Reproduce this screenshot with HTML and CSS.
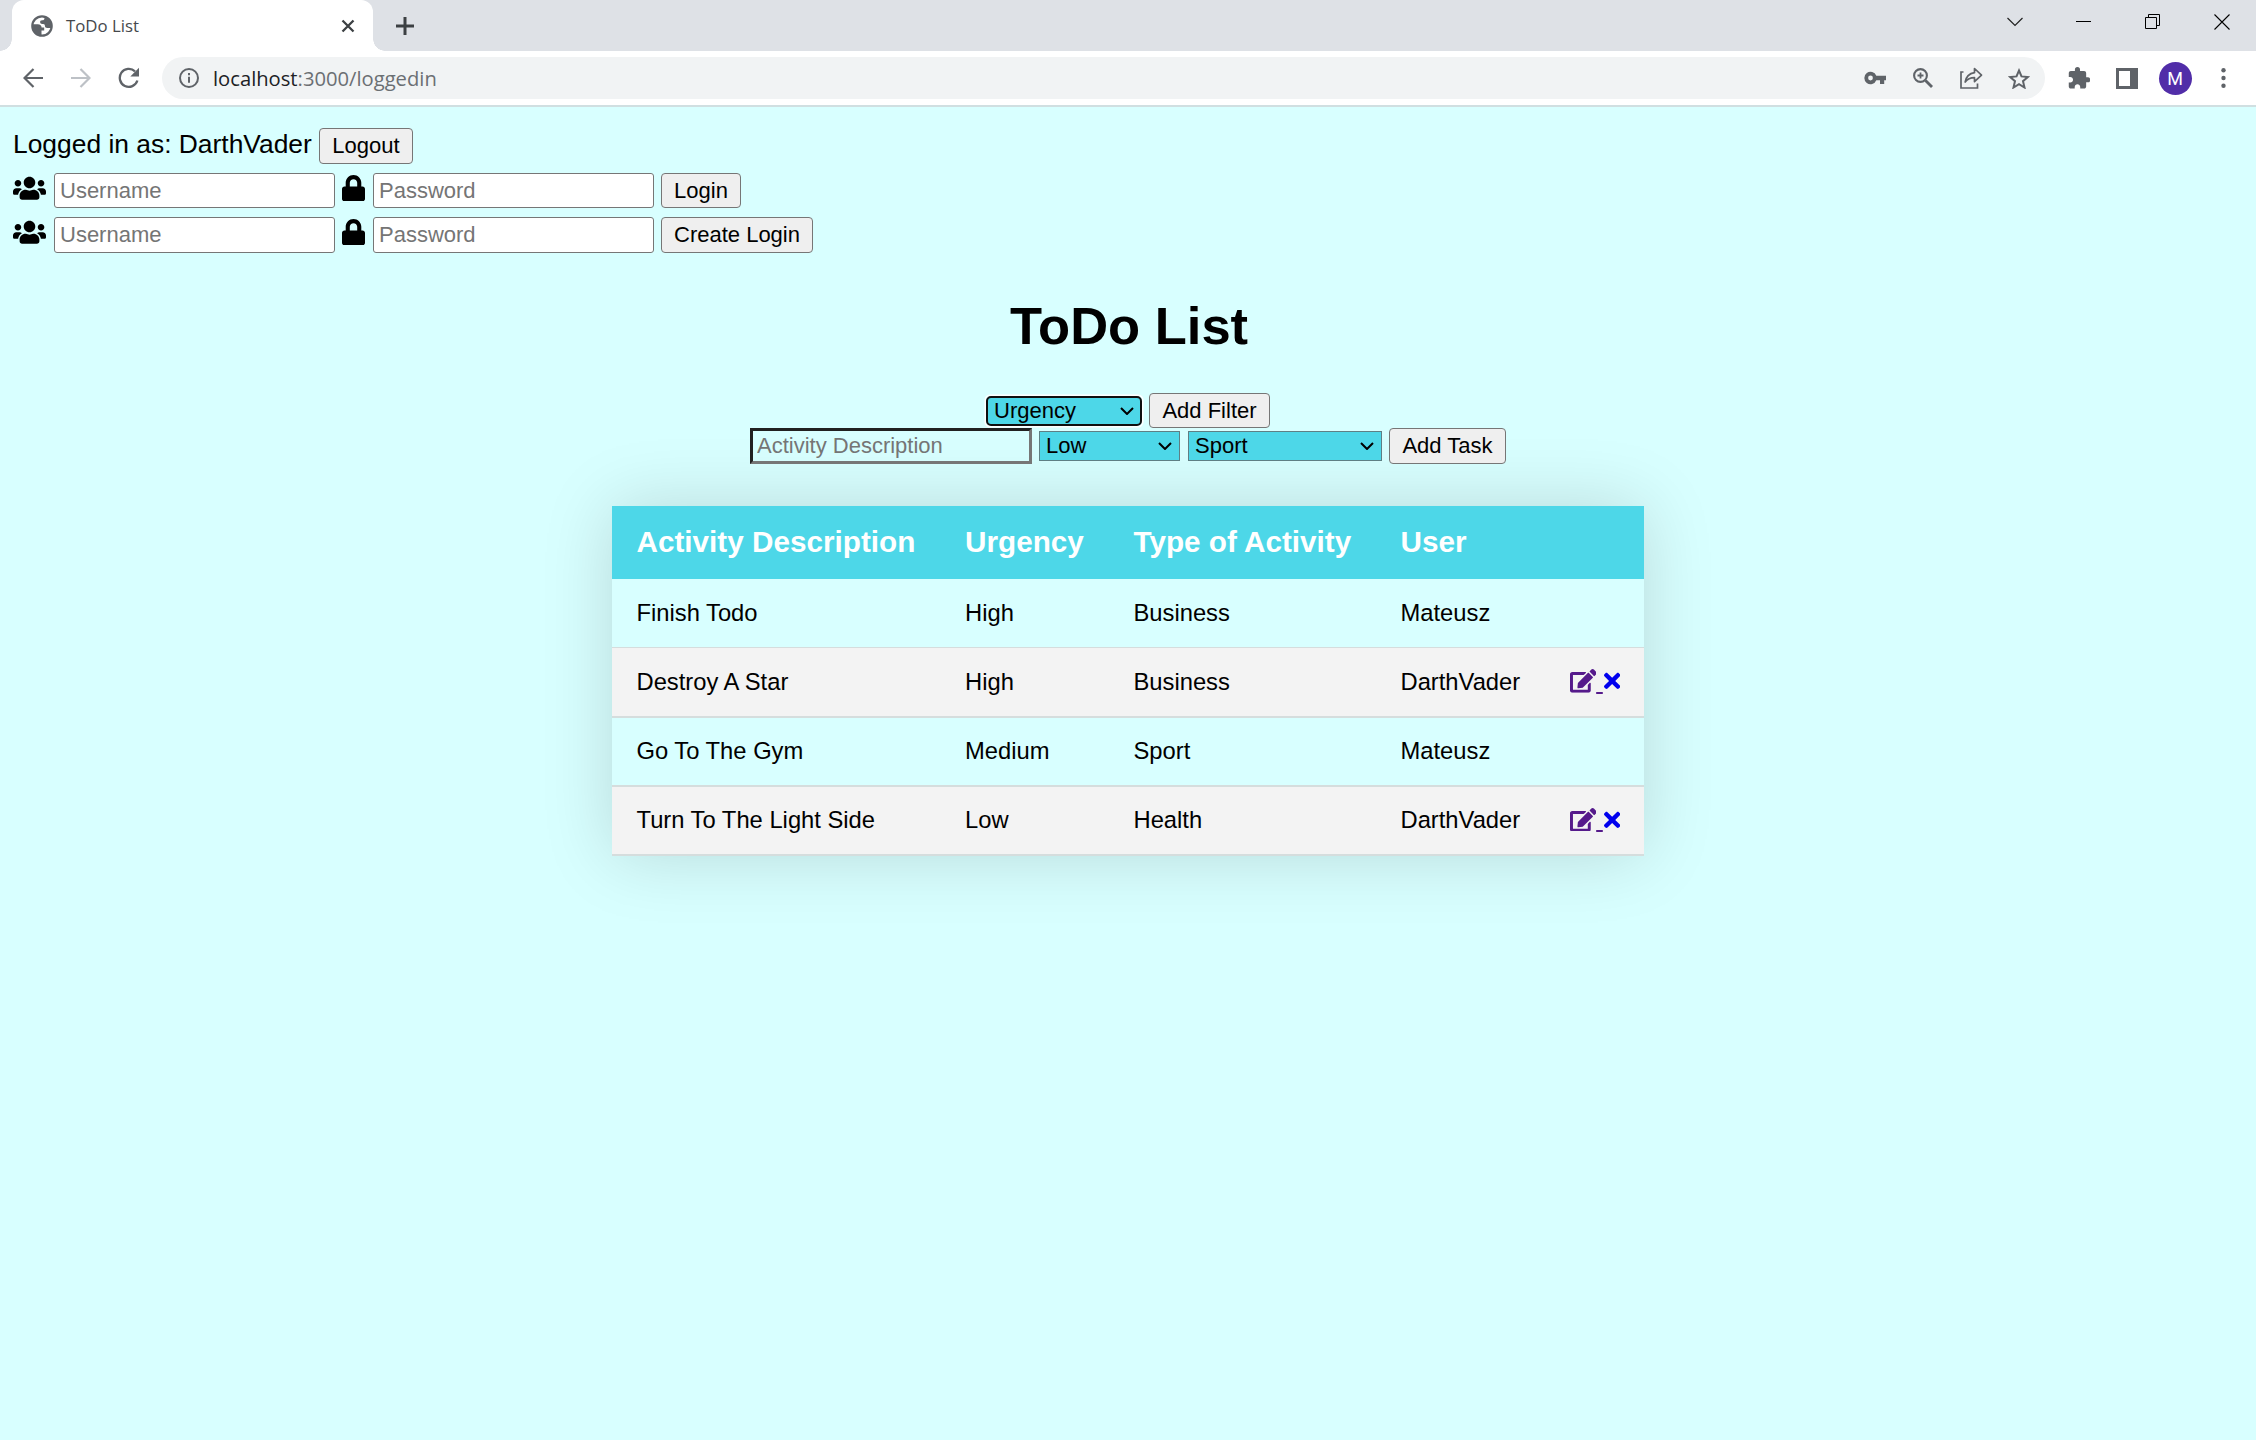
FILE: index.html
```html
<!DOCTYPE html>
<html lang="en">
<head>
<meta charset="utf-8">
<title>ToDo List</title>
<link rel="stylesheet" href="styles.css">
</head>
<body>
<svg class="defs" aria-hidden="true">
  <symbol id="users" viewBox="0 0 640 512"><path d="M96 224c35.3 0 64-28.7 64-64s-28.7-64-64-64-64 28.7-64 64 28.7 64 64 64zm448 0c35.3 0 64-28.7 64-64s-28.7-64-64-64-64 28.7-64 64 28.7 64 64 64zm32 32h-64c-17.6 0-33.5 7.1-45.1 18.6 40.3 22.1 68.9 62 75.1 109.4h66c17.7 0 32-14.3 32-32v-32c0-35.3-28.7-64-64-64zm-256 0c61.9 0 112-50.1 112-112S381.9 32 320 32 208 82.1 208 144s50.1 112 112 112zm76.8 32h-8.3c-20.8 10-43.9 16-68.5 16s-47.6-6-68.5-16h-8.3C179.6 288 128 339.6 128 403.2V432c0 26.5 21.5 48 48 48h288c26.5 0 48-21.5 48-48v-28.8c0-63.6-51.6-115.2-115.2-115.2zm-223.7-13.4C161.5 263.1 145.6 256 128 256H64c-35.3 0-64 28.7-64 64v32c0 17.7 14.3 32 32 32h65.9c6.3-47.4 34.9-87.3 75.2-109.4z"/></symbol>
  <symbol id="lock" viewBox="0 0 448 512"><path d="M400 224h-24v-72C376 68.2 307.8 0 224 0S72 68.2 72 152v72H48c-26.5 0-48 21.5-48 48v192c0 26.5 21.5 48 48 48h352c26.5 0 48-21.5 48-48V272c0-26.5-21.5-48-48-48zm-104 0H152v-72c0-39.7 32.3-72 72-72s72 32.3 72 72v72z"/></symbol>
  <symbol id="edit" viewBox="0 0 576 512"><path d="M402.6 83.2l90.2 90.2c3.8 3.8 3.8 10 0 13.8L274.4 405.6l-92.8 10.3c-12.4 1.4-22.9-9.1-21.5-21.5l10.3-92.8L388.8 83.2c3.8-3.8 10-3.8 13.8 0zm162-22.9l-48.8-48.8c-15.2-15.2-39.9-15.2-55.2 0l-35.4 35.4c-3.8 3.8-3.8 10 0 13.8l90.2 90.2c3.8 3.8 10 3.8 13.8 0l35.4-35.4c15.2-15.3 15.2-40 0-55.2zM384 346.2V448H64V128h229.8c3.2 0 6.2-1.3 8.5-3.5l40-40c7.6-7.6 2.2-20.5-8.5-20.5H48C21.5 64 0 85.5 0 112v352c0 26.5 21.5 48 48 48h352c26.5 0 48-21.5 48-48V306.2c0-10.7-12.9-16-20.5-8.5l-40 40c-2.2 2.3-3.5 5.3-3.5 8.5z"/></symbol>
  <symbol id="times" viewBox="0 0 352 512"><path d="M242.72 256l100.07-100.07c12.28-12.28 12.28-32.19 0-44.48l-22.24-22.24c-12.28-12.28-32.19-12.28-44.48 0L176 189.28 75.93 89.21c-12.28-12.28-32.19-12.28-44.48 0L9.21 111.45c-12.28 12.28-12.28 32.19 0 44.48L109.28 256 9.21 356.07c-12.28 12.28-12.28 32.19 0 44.48l22.24 22.24c12.28 12.28 32.2 12.28 44.48 0L176 322.72l100.07 100.07c12.28 12.28 32.2 12.28 44.48 0l22.24-22.24c12.28-12.28 12.28-32.19 0-44.48L242.72 256z"/></symbol>
  <symbol id="chevron" viewBox="0 0 14 8"><path d="M1 1l6 6 6-6" fill="none" stroke="#000" stroke-width="2"/></symbol>
</svg>

<header class="browser">
  <div class="tabstrip">
    <div class="tab">
      <svg class="globe" viewBox="0 0 22 22"><circle cx="11" cy="11" r="9.700" fill="#fff" stroke="#5f6368" stroke-width="2.200"/><path d="M1 9.200h5.800c2.400 0 3.800 1.300 3.800 3.400h2.600v2.800H10.500v5.400C5 20.600 1 16.500 1 11zM13.500 1.600v1.300c0 1.500-.8 2.300-2.300 2.300-1.600 0-2.100.8-2.100 1.900 0 1.300.8 1.900 2.100 1.900h1c1.200 0 1.700.8 1.700 1.700 0 1.500 1 2.200 2.300 2.200h4.800C21.500 7.500 18.500 3 13.500 1.600z" fill="#5f6368"/></svg>
      <span class="tab-title">ToDo List</span>
      <svg class="tab-close" viewBox="0 0 14 14"><path d="M1.500 1.500l11 11m0-11l-11 11" fill="none" stroke="#3c4043" stroke-width="2.300"/></svg>
    </div>
    <svg class="new-tab" viewBox="0 0 18 18"><path d="M9 0v18M0 9h18" stroke="#3c4043" stroke-width="3"/></svg>
    <div class="window-buttons">
      <span><svg width="16" height="10" viewBox="0 0 16 10"><path d="M.5 1l7.500 7.500L15.500 1" fill="none" stroke="#222" stroke-width="1.200"/></svg></span>
      <span><svg width="15" height="15" viewBox="0 0 15 15"><path d="M0 7.500h15" stroke="#000"/></svg></span>
      <span><svg width="15" height="15" viewBox="0 0 15 15"><path d="M.5 3.500h11v11H.5zM3.500 3.500v-3h11v11h-3" fill="none" stroke="#000"/></svg></span>
      <span><svg width="16" height="16" viewBox="0 0 16 16"><path d="M.5.5l15 15m0-15l-15 15" stroke="#000" stroke-width="1.100"/></svg></span>
    </div>
  </div>
  <div class="toolbar">
    <span class="tool"><svg width="20" height="20" viewBox="0 0 20 20"><path d="M20 10H2M10.500 1L1.500 10l9 9" fill="none" stroke="#5f6368" stroke-width="2.200"/></svg></span>
    <span class="tool"><svg width="20" height="20" viewBox="0 0 20 20"><path d="M0 10h18M9.500 1l9 9-9 9" fill="none" stroke="#bdc1c6" stroke-width="2.200"/></svg></span>
    <span class="tool"><svg width="22" height="22" viewBox="0 0 22 22"><path d="M19.400 13.500A9 9 0 1 1 17 4.300" fill="none" stroke="#5f6368" stroke-width="2.300"/><path d="M21 .8v8.700h-8.700z" fill="#5f6368"/></svg></span>
    <div class="omnibox">
      <svg class="info" viewBox="0 0 20 20"><circle cx="10" cy="10" r="9" fill="none" stroke="#5f6368" stroke-width="2"/><path d="M10 8.700v6M10 5v2.200" stroke="#5f6368" stroke-width="2"/></svg>
      <span class="url">localhost<span class="path">:3000/loggedin</span></span>
      <span class="tool"><svg width="22" height="14" viewBox="0 0 22 14"><path fill="#5f6368" fill-rule="evenodd" d="M12.300 4.700A6.200 6.200 0 1 0 12.300 9.200H16V13h4.200V9.200H22V4.700zM6.500 4.600a2.400 2.400 0 1 1 0 4.800 2.400 2.400 0 0 1 0-4.800z"/></svg></span>
      <span class="tool"><svg width="20" height="20" viewBox="0 0 20 20"><path d="M12.500 12.500l6.500 6.500" stroke="#5f6368" stroke-width="2.800"/><path d="M7.500 4.500v6m-3-3h6" stroke="#5f6368" stroke-width="1.800"/><circle cx="7.500" cy="7.500" r="6.400" fill="none" stroke="#5f6368" stroke-width="2.100"/></svg></span>
      <span class="tool"><svg width="23" height="22" viewBox="0 0 23 22"><path d="M3.500 5H1v16h16.500v-4.500" fill="none" stroke="#5f6368" stroke-width="1.700"/><path d="M14.500 1.500l7 6.600-7 6.600v-4c-4.300 0-7 1.200-9.300 4.300.8-4.600 3.500-8.400 9.300-9.300z" fill="none" stroke="#5f6368" stroke-width="1.700" stroke-linejoin="round"/></svg></span>
      <span class="tool"><svg width="22" height="21" viewBox="0 0 22 21"><path d="M11 2.500l2.500 5.900 6.400.6-4.900 4.200 1.500 6.300-5.500-3.300-5.500 3.300L7 13.200 2.100 9l6.400-.6z" fill="none" stroke="#5f6368" stroke-width="2"/></svg></span>
    </div>
    <span class="tool"><svg width="22" height="22" viewBox="1.500 1 21 21.500"><path fill="#5f6368" d="M20.500 11H19V7c0-1.100-.9-2-2-2h-4V3.500a2.500 2.500 0 0 0-5 0V5H4c-1.100 0-1.990.9-1.990 2v3.800H3.500c1.490 0 2.700 1.210 2.700 2.700s-1.210 2.700-2.700 2.700H2V20c0 1.100.9 2 2 2h3.800v-1.500c0-1.490 1.210-2.700 2.700-2.700s2.700 1.210 2.700 2.700V22H17c1.100 0 2-.9 2-2v-4h1.500a2.500 2.500 0 0 0 0-5z"/></svg></span>
    <span class="tool"><svg width="22" height="21" viewBox="0 0 22 21"><path fill="#5f6368" fill-rule="evenodd" d="M0 0h22v21H0zM3 3v15h11V3z"/></svg></span>
    <span class="tool"><span class="avatar">M</span></span>
    <span class="tool"><svg width="5" height="20" viewBox="0 0 5 20"><g fill="#5f6368"><circle cx="2.500" cy="2.200" r="2.200"/><circle cx="2.500" cy="10" r="2.200"/><circle cx="2.500" cy="17.800" r="2.200"/></g></svg></span>
  </div>
</header>

<main>
  <section class="account">
    <div class="session"><span>Logged in as: DarthVader</span><button class="btn">Logout</button></div>
    <form class="credentials">
      <svg class="fa-users"><use href="#users"/></svg>
      <input class="field" placeholder="Username">
      <svg class="fa-lock"><use href="#lock"/></svg>
      <input class="field" type="password" placeholder="Password">
      <button class="btn login">Login</button>
    </form>
    <form class="credentials">
      <svg class="fa-users"><use href="#users"/></svg>
      <input class="field" placeholder="Username">
      <svg class="fa-lock"><use href="#lock"/></svg>
      <input class="field" type="password" placeholder="Password">
      <button class="btn create">Create Login</button>
    </form>
  </section>

  <h1>ToDo List</h1>

  <form class="controls filter">
    <span class="select focused"><select><option>Urgency</option></select><svg><use href="#chevron"/></svg></span>
    <button class="btn">Add Filter</button>
  </form>
  <form class="controls add">
    <input class="activity" placeholder="Activity Description">
    <span class="select level"><select><option>Low</option></select><svg><use href="#chevron"/></svg></span>
    <span class="select kind"><select><option>Sport</option></select><svg><use href="#chevron"/></svg></span>
    <button class="btn">Add Task</button>
  </form>

  <table>
    <colgroup><col class="c1"><col class="c2"><col class="c3"><col class="c4"><col class="c5"></colgroup>
    <thead><tr><th>Activity Description</th><th>Urgency</th><th>Type of Activity</th><th>User</th><th></th></tr></thead>
    <tbody>
      <tr><td>Finish Todo</td><td>High</td><td>Business</td><td>Mateusz</td><td></td></tr>
      <tr><td>Destroy A Star</td><td>High</td><td>Business</td><td>DarthVader</td><td class="actions"><a class="edit"><svg><use href="#edit"/></svg>&nbsp;</a><a class="remove"><svg><use href="#times"/></svg></a></td></tr>
      <tr><td>Go To The Gym</td><td>Medium</td><td>Sport</td><td>Mateusz</td><td></td></tr>
      <tr><td>Turn To The Light Side</td><td>Low</td><td>Health</td><td>DarthVader</td><td class="actions"><a class="edit"><svg><use href="#edit"/></svg>&nbsp;</a><a class="remove"><svg><use href="#times"/></svg></a></td></tr>
    </tbody>
  </table>
</main>
</body>
</html>
```
FILE: styles.css
```css
* { box-sizing: border-box; }

body {
  margin: 0;
  min-height: 1440px;
  background: #d8ffff;
  color: #000;
  font-family: "Liberation Sans", Arial, sans-serif;
  font-size: 26.4px;
}

.defs { display: none; }
svg { display: block; flex: none; }

/* Browser frame */
.browser { height: 107px; background: #fff; border-bottom: 2px solid #d0dfe1; }

.tabstrip { display: flex; height: 51px; background: #dee1e6; }

.tab {
  position: relative;
  display: flex;
  align-items: center;
  width: 361px;
  margin-left: 12px;
  padding: 0 18px 0 19px;
  background: #fff;
  border-radius: 12px 12px 0 0;
}
.tab::before, .tab::after {
  content: "";
  position: absolute;
  bottom: 0;
  width: 12px;
  height: 12px;
}
.tab::before { left: -12px; background: radial-gradient(circle at 0 0, #dee1e6 11.500px, #fff 12px); }
.tab::after { right: -12px; background: radial-gradient(circle at 100% 0, #dee1e6 11.500px, #fff 12px); }

.globe { width: 22px; height: 22px; }
.tab-title {
  flex: 1;
  margin-left: 13px;
  font: 16.800px "Open Sans", "Noto Sans", sans-serif;
  color: #45484c;
}
.tab-close { width: 14px; height: 14px; }
.new-tab { width: 18px; height: 18px; margin: 17px 0 0 23px; }

.window-buttons { display: flex; height: 43px; margin-left: auto; }
.window-buttons span { display: flex; width: 69px; align-items: center; justify-content: center; }

.toolbar { display: flex; align-items: center; height: 54px; padding: 0 9px; }
.tool { display: flex; width: 48px; flex: none; align-items: center; justify-content: center; }

.omnibox {
  display: flex;
  flex: 1;
  align-items: center;
  height: 42px;
  margin: 0 10px 0 9px;
  padding: 0 2px 0 17px;
  background: #f1f3f4;
  border-radius: 21px;
}
.info { width: 20px; height: 20px; }
.url { flex: 1; margin-left: 14px; font: 20.200px "Open Sans", "Noto Sans", sans-serif; color: #202124; }
.path { color: #6b6f73; }

.avatar {
  width: 33px;
  height: 33px;
  border-radius: 50%;
  background: #512da8;
  color: #fff;
  font: 18px/34px Roboto, sans-serif;
  text-align: center;
}

/* Shared controls */
.btn, .field, .activity, select { margin: 0; font: 22px "Liberation Sans", Arial, sans-serif; color: #000; }
.btn {
  height: 35px;
  padding: 0;
  border: 1px solid #767676;
  border-radius: 4px;
  background: #efefef;
}
.field { width: 281px; height: 35px; padding: 0 5px; border: 1px solid #767676; border-radius: 3px; background: #fff; }
input::placeholder { color: #757575; opacity: 1; }

/* Account forms */
.account { padding: 21px 13px 0; }
.session { display: flex; align-items: center; gap: 7px; height: 36px; }
.session span { width: 299px; white-space: nowrap; line-height: 32px; margin-bottom: 4px; }
.session .btn { width: 94px; height: 36px; }
.credentials { display: flex; height: 35px; margin-top: 9px; }
.credentials + .credentials .field, .create { height: 36px; }
.fa-users { width: 33px; height: 26.400px; margin: 2px 8px 0 0; }
.fa-lock { width: 23px; height: 26.400px; margin: 2px 8px 0 7px; }
.credentials .btn { margin-left: 7px; }
.login { width: 80px; }
.create { width: 152px; }

h1 { margin: 43px 0 36px; padding-left: 2px; font-size: 52.500px; line-height: 62px; text-align: center; }

/* Filter and task forms */
.controls { display: flex; justify-content: center; align-items: center; height: 35px; }
.select { position: relative; display: flex; height: 30px; }
.select select {
  width: 100%;
  padding: 0 6px;
  border: 1px solid #5f7f84;
  border-radius: 0;
  background: #4dd7e8;
  appearance: none;
  outline: none;
}
.select svg { position: absolute; right: 8px; top: 11px; width: 14px; height: 8px; pointer-events: none; }
.focused { width: 156px; margin-right: 7px; border-radius: 4px; box-shadow: 0 0 0 1.500px #fff; }
.focused select { padding: 0 6px; border: 2px solid #101010; border-radius: 5px; }
.filter .btn { width: 121px; }
.activity {
  width: 282px;
  height: 36px;
  padding: 0 4px;
  border: 3px inset #767676;
  background: transparent;
}
.level { width: 141px; margin: 0 8px 0 7px; }
.kind { width: 194px; margin-right: 7px; }
.add .btn { width: 117px; height: 36px; }

/* Task table */
table {
  width: 1032px;
  margin: 43px auto 0;
  table-layout: fixed;
  border-collapse: separate;
  border-spacing: 0;
  font-size: 23.760px;
  box-shadow: 0 0 66px rgba(0, 0, 0, .15);
}
.c1 { width: 328.500px; }
.c2 { width: 168.500px; }
.c3 { width: 267px; }
.c4 { width: 169px; }
.c5 { width: 99px; }
th, td { padding: 0 0 0 24.500px; text-align: left; white-space: nowrap; line-height: 27px; }
th { height: 73px; padding-bottom: 2px; background: #4dd7e8; color: #fff; font-size: 29.700px; }
td { height: 69.250px; padding-bottom: 1px; border-bottom: 2px solid #d5dddd; }
tbody tr:first-child td { border-bottom-width: 1px; padding-bottom: 2px; }
tbody tr:nth-child(odd) { background: #d8ffff; }
tbody tr:nth-child(even) { background: #f3f3f3; }
.edit, .remove { text-decoration: underline; }
.edit { color: #551a8b; }
.remove { color: #0000ee; }
.actions svg { display: inline-block; height: 23.760px; vertical-align: -3px; fill: currentColor; }
.edit svg { width: 26.700px; }
.remove svg { width: 16.300px; margin-left: 1px; }
```
